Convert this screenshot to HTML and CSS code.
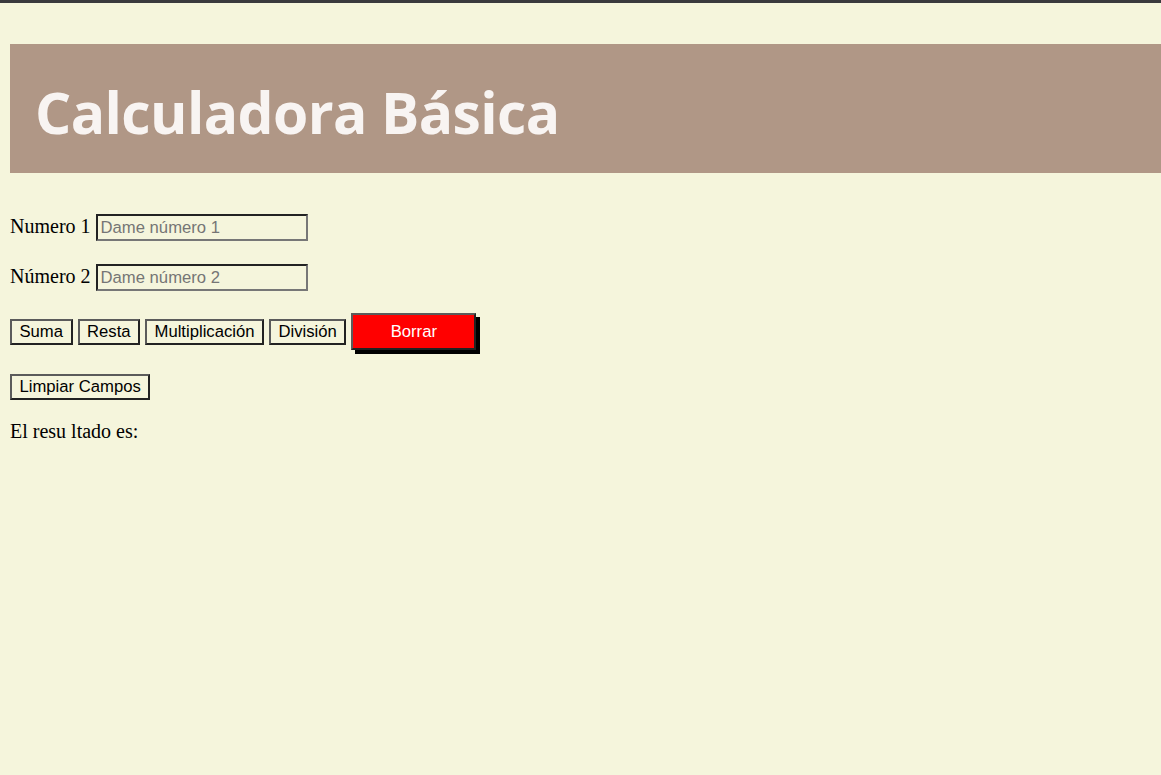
FILE: index.html
```html
<!DOCTYPE html>
<html lang="es">
<head>
<meta charset="utf-8">
<title>Calculadora Básica</title>
<link rel="stylesheet" href="styles.css">
</head>
<body>
<div class="topbar"></div>
<main class="page">
  <header class="header">
    <h1 class="title">Calculadora Básica</h1>
  </header>
  <div class="row row-first">
    <label class="label" for="n1">Numero 1</label>
    <input class="field" id="n1" type="text" placeholder="Dame número 1">
  </div>
  <div class="row row-second">
    <label class="label" for="n2">Número 2</label>
    <input class="field" id="n2" type="text" placeholder="Dame número 2">
  </div>
  <div class="row row-buttons">
    <button class="btn">Suma</button>
    <button class="btn">Resta</button>
    <button class="btn">Multiplicación</button>
    <button class="btn">División</button>
    <button class="btn btn-danger">Borrar</button>
  </div>
  <div class="row row-clear">
    <button class="btn">Limpiar Campos</button>
  </div>
  <p class="result">El resu ltado es:</p>
</main>
</body>
</html>
```

FILE: styles.css
```css
html, body {
  margin: 0;
  padding: 0;
  background: #f5f5dc;
}

body {
  font-family: "Liberation Serif", "Times New Roman", serif;
  font-size: 20px;
  color: #000;
  overflow-x: hidden;
}

.topbar {
  height: 3px;
  background: #3a3a3d;
}

.page {
  padding-left: 10px;
}

.header {
  margin-top: 41px;
  background: #b09786;
  padding: 29px 25px 22px;
}

.title {
  margin: 0;
  font-family: "Open Sans", "Noto Sans", sans-serif;
  font-weight: 700;
  font-size: 57px;
  line-height: 78px;
  color: #f8f4f2;
  letter-spacing: -0.6px;
}

.row {
  display: flex;
  align-items: baseline;
  gap: 5px;
}

.row-first {
  margin-top: 41px;
}

.row-second {
  margin-top: 23px;
}

.row-buttons {
  margin-top: 22px;
  align-items: center;
  gap: 5px;
}

.row-clear {
  margin-top: 24px;
}

.label {
  line-height: 23px;
}

.field {
  box-sizing: border-box;
  width: 212px;
  height: 27px;
  margin: 0;
  padding: 1px 3px;
  border: 2px solid;
  border-color: #222 #777 #777 #222;
  background: transparent;
  font-family: "Liberation Sans", Arial, sans-serif;
  font-size: 16.67px;
  color: #000;
}

.field::placeholder {
  color: #757575;
}

.btn {
  box-sizing: border-box;
  height: 26px;
  margin: 0;
  padding: 0 7.5px;
  border: 2px solid;
  border-color: #5b5b5b #222 #222 #5b5b5b;
  background: #f5f5dc;
  font-family: "Liberation Sans", Arial, sans-serif;
  font-size: 16.67px;
  color: #000;
  line-height: 20px;
}

.btn-danger {
  width: 125px;
  height: 37px;
  background: #ff0000;
  color: #fff;
  box-shadow: 4px 4px 0 #000;
}

.result {
  margin: 20px 0 0;
  line-height: 23px;
}
```
